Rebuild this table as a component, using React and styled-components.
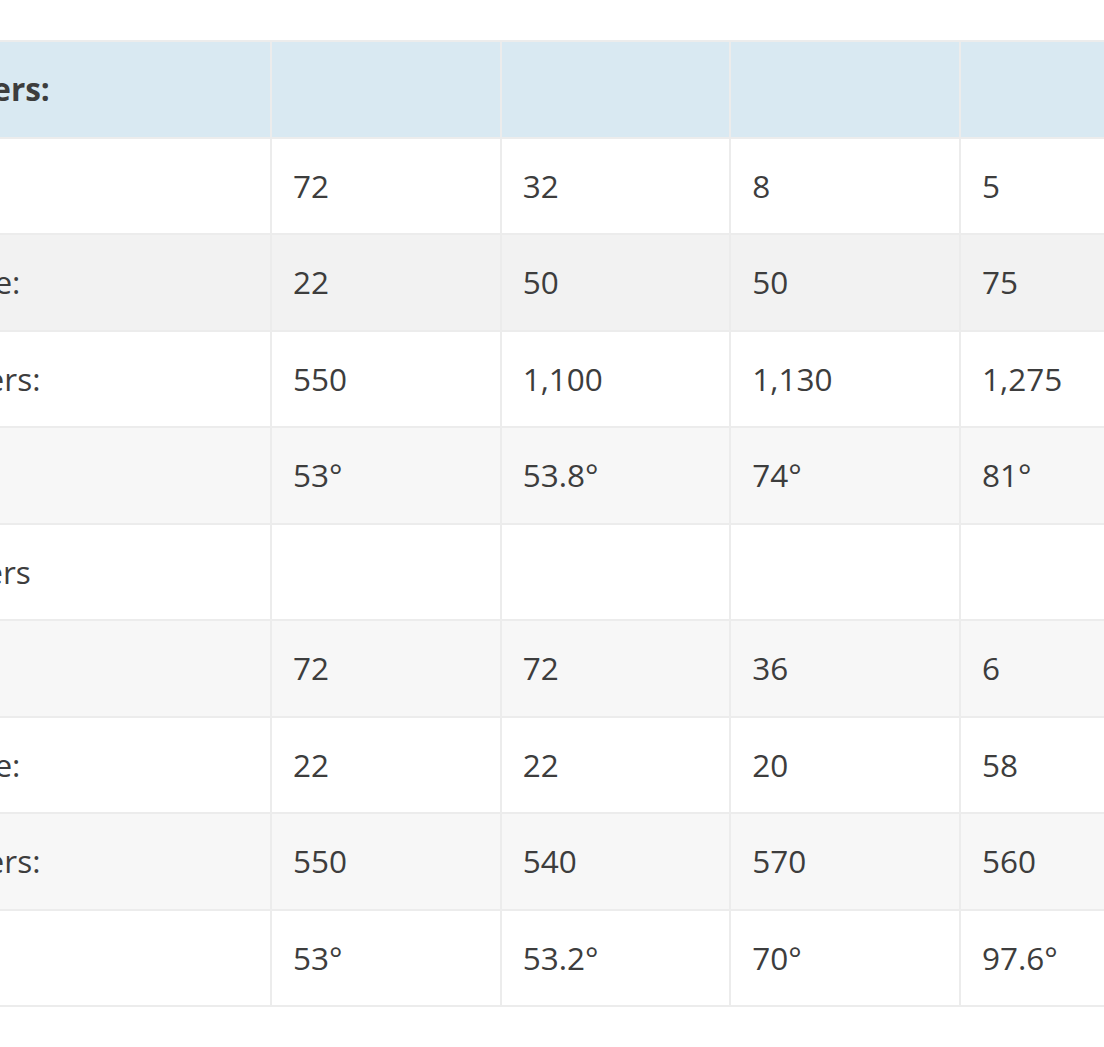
import React from 'react';
import styled, { createGlobalStyle } from 'styled-components';

const GlobalStyle = createGlobalStyle`
  html, body {
    margin: 0;
    padding: 0;
    background: #fff;
    overflow: hidden;
  }

  body {
    font-family: 'Open Sans', 'Liberation Sans', sans-serif;
    color: #3d3d3d;
  }
`;

const Page = styled.div`
  width: 1104px;
  height: 1047px;
  padding-top: 40px;
  box-sizing: border-box;
  overflow: hidden;
`;

// the table is wider than the view; its label column runs off the left edge
const Table = styled.table`
  margin-left: -186px;
  width: 1376.68px;
  table-layout: fixed;
  border-collapse: separate;
  border-spacing: 0;
  border-top: 2px solid #ececec;
  border-left: 2px solid #ececec;
  font-size: 31.5px;
  line-height: 1.4;
`;

const Col = styled.col`
  width: ${(p) => (p.$label ? '456px' : '229.67px')};
`;

const tones = {
  head: '#d9e9f2',
  plain: '#ffffff',
  alt: '#f7f7f7',
  hover: '#f2f2f2',
};

const Row = styled.tr`
  background-color: ${(p) => tones[p.$tone]};
`;

const Cell = styled.td`
  box-sizing: content-box;
  height: 94.5px;
  padding: 0 21px;
  vertical-align: middle;
  text-align: left;
  white-space: nowrap;
  border-right: 2px solid #ececec;
  border-bottom: 2px solid #ececec;
  font-weight: ${(p) => (p.$bold ? 700 : 400)};
`;

const rows = [
  { label: 'Outer Layers:', head: true, values: ['', '', '', ''] },
  { label: 'Count', values: ['72', '32', '8', '5'] },
  { label: 'Module size:', values: ['22', '50', '50', '75'], tone: 'hover' },
  { label: 'Arc in meters:', values: ['550', '1,100', '1,130', '1,275'] },
  { label: 'Angle', values: ['53°', '53.8°', '74°', '81°'], tone: 'alt' },
  { label: 'Lower Layers', values: ['', '', '', ''] },
  { label: 'Count', values: ['72', '72', '36', '6'], tone: 'alt' },
  { label: 'Module size:', values: ['22', '22', '20', '58'] },
  { label: 'Arc in meters:', values: ['550', '540', '570', '560'], tone: 'alt' },
  { label: 'Angle', values: ['53°', '53.2°', '70°', '97.6°'] },
];

export default function App() {
  return (
    <Page>
      <GlobalStyle />
      <Table>
        <colgroup>
          <Col $label />
          <Col />
          <Col />
          <Col />
          <Col />
        </colgroup>
        <tbody>
          {rows.map((row, i) => (
            <Row key={i} $tone={row.head ? 'head' : row.tone || 'plain'}>
              <Cell as={row.head ? 'th' : 'td'} $bold={row.head}>
                {row.label}
              </Cell>
              {row.values.map((v, j) => (
                <Cell key={j} as={row.head ? 'th' : 'td'}>
                  {v}
                </Cell>
              ))}
            </Row>
          ))}
        </tbody>
      </Table>
    </Page>
  );
}
